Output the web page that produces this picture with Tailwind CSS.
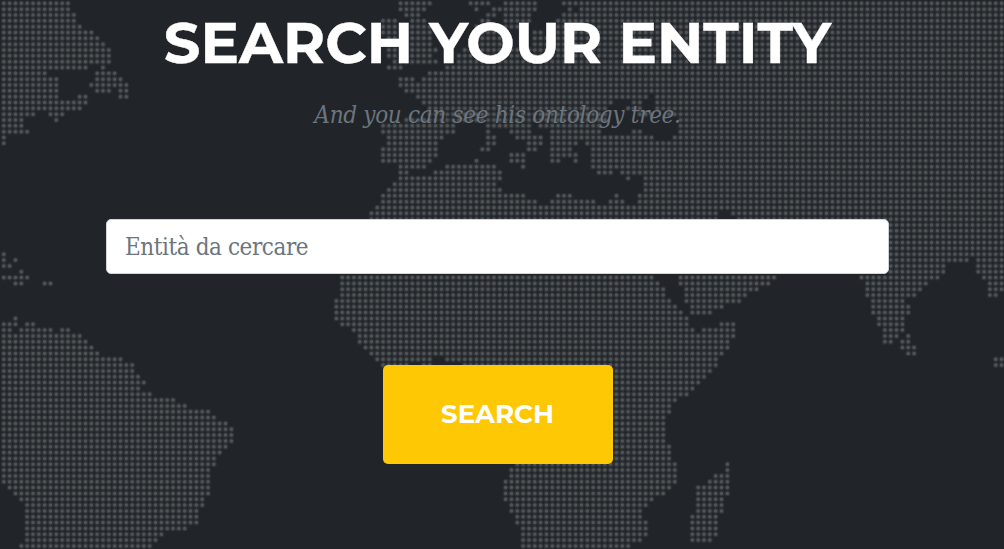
<!DOCTYPE html>
<html lang="en">
<head>
<meta charset="utf-8">
<title>Search your entity</title>
<script src="https://cdn.jsdelivr.net/npm/@tailwindcss/browser@4"></script>
</head>
<body class="bg-[#212529]">
<main class="relative h-[549px] w-[1004px] overflow-hidden bg-[#212529]">
  <svg class="absolute inset-0" width="1004" height="549" viewBox="0 0 1004 549" fill="none" stroke-linecap="round" aria-hidden="true">
    <path class="dots" stroke="#6b6f72" stroke-opacity="0.2" stroke-width="5.8"/>
    <path class="dots" stroke="#4f5356" stroke-width="3.5"/>
  </svg>
  <section class="relative flex flex-col items-center pr-[9px]">
    <h1 class="mt-[8px] h-[68px] whitespace-nowrap font-['Montserrat','Inter',sans-serif] text-[57.4px] font-bold leading-[68px] text-white [-webkit-text-stroke:0.4px_white]">SEARCH YOUR ENTITY</h1>
    <p class="mt-[21px] h-[36px] whitespace-nowrap font-['Roboto_Slab','DejaVu_Serif_Condensed','DejaVu_Serif',serif] text-[24px] italic leading-[36px] tracking-[-0.31px] text-[#6c757d]">And you can see his ontology tree.</p>
    <form class="mt-[86px] flex flex-col items-center">
      <input type="text" placeholder="Entità da cercare" class="h-[55px] w-[783px] rounded-[5px] border border-[#ced4da] bg-white px-[18px] font-['Roboto_Slab','DejaVu_Serif_Condensed','DejaVu_Serif',serif] text-[24px] tracking-[-0.43px] placeholder:text-[#6c757d]">
      <button type="button" class="mt-[91px] h-[99px] w-[230px] rounded-[5px] bg-[#ffc805] pb-[1px] font-['Montserrat','Inter',sans-serif] text-[26px] font-bold text-white">SEARCH</button>
    </form>
  </section>
</main>
<script>
// Land cells of the dotted world map: one string per row, each entry "first-last" column.
const rows = `0-11 68-73 80-83 86-91 96-171
0-11 68-72 81 84-91 97 99-171
0-12 69-71 83-84 86-90 96-171
0-12 65-67 70-72 82-83 86-90 95-171
0-13 65-67 70-73 81-88 95-171
0-15 65-67 70-73 81-86 91-92 95-171
0-16 66-67 70-73 80-86 91-171
0-17 66-67 70-73 80-86 91-171
0-18 66-67 70-74 79-171
0-18 66-67 70-73 78-171
0-18 67-74 78-171
0-14 17 66-68 76-171
0-7 16-19 73-171
0-9 16-20 68-70 72-171
0-9 15-21 68-171
0-9 16-18 20-21 69-171
0-9 13-14 20-21 71-110 112-171
0-14 72-104 108-109 112-171
0-13 73-103 107-109 112-171
0-5 8-10 73-103 109-111 114-171
0-3 9 69-103 116-171
0-3 65-77 83-90 92-102 116-171
0-4 65-77 83 87-90 94-102 108-109 116-171
0 66-75 83-84 88-92 94-111 115-171
0 66-74 83-84 90-92 94-98 100-171
-1 65-74 82-83 90-91 94-97 101-171
65-74 87-89 94-98 101-171
65-73 81 87-89 94-95 98 101-171
68-72 76-84 89 101-171
68-69 74-85 102-104 106-171
68-85 107 110-171
67-84 110-171
66-85 110-171
65-89 95-97 105 109-171
65-91 94-101 104-106 109-171
64-171
63-122 125-171
63-122 126-171
152-171
152-171
152-171
152-171
152-171
0 152-171
0 2 152-165 167-171
0-1 152-161 167-171
3 152-161 167-171
0-4 58-111 116-132 147-160 168-171
2-3 7-8 58-112 116-131 148-158 169-171
58-113 117-129 148-157 169-171
58-113 117-127 148-156 169-170
57-114 117-126 149-154
57-115 118-123 149-155
57-116 118-121 149-155
2 57-117 150-154
0-2 4-5 58-117 123-125 150-154
0-1 3-8 10-11 60-118 120-125 151-154
0-13 61-125 151-153 155
0-14 61-124 151-152 154-155
0-15 62-124 154-156
0-16 63-123 155-156
0-20 64-73 76-122 170-171
0-22 65-69 72-73 79-122 170-171
0-22 100-121
0-23 100-120
0-24 100-119
0-23 100-118
0-25 100-117
0-29 100-115
0-31 100-114
0-35 100-114
0-36 100-113
0-38 100-113
0-39 100-113
0-39 100-113
0-39 100-113
0-38 100-114
0-37 100-114
0-36 100-114
0-36 88-115 124
0-35 87-115 124
0-35 87-115 122-124
0-35 86-115 121-124
1-35 86-114 119-124
2-35 86-113 119-124
3-34 86-111 119-123
4-34 87-110 119-123
4-33 87-109 119-123
4-33 88-109 118-122
4-33 88-110 118-122
4-31 89-110 118-122
4-27 89-110 118-122
4-26 89-109 118-121
3-25 89-107`.split("\n");
const pitch = 5.835;
let d = "";
rows.forEach((line, r) => line.split(" ").forEach(run => {
  if (run.startsWith("-")) return;
  const [a, b = a] = run.split("-").map(Number);
  for (let c = a; c <= b; c++) {
    d += `M${(3.8 + c * pitch).toFixed(2)} ${(3.3 + r * pitch).toFixed(2)}h0.01`;
  }
}));
document.querySelectorAll(".dots").forEach(p => p.setAttribute("d", d));
</script>
</body>
</html>
